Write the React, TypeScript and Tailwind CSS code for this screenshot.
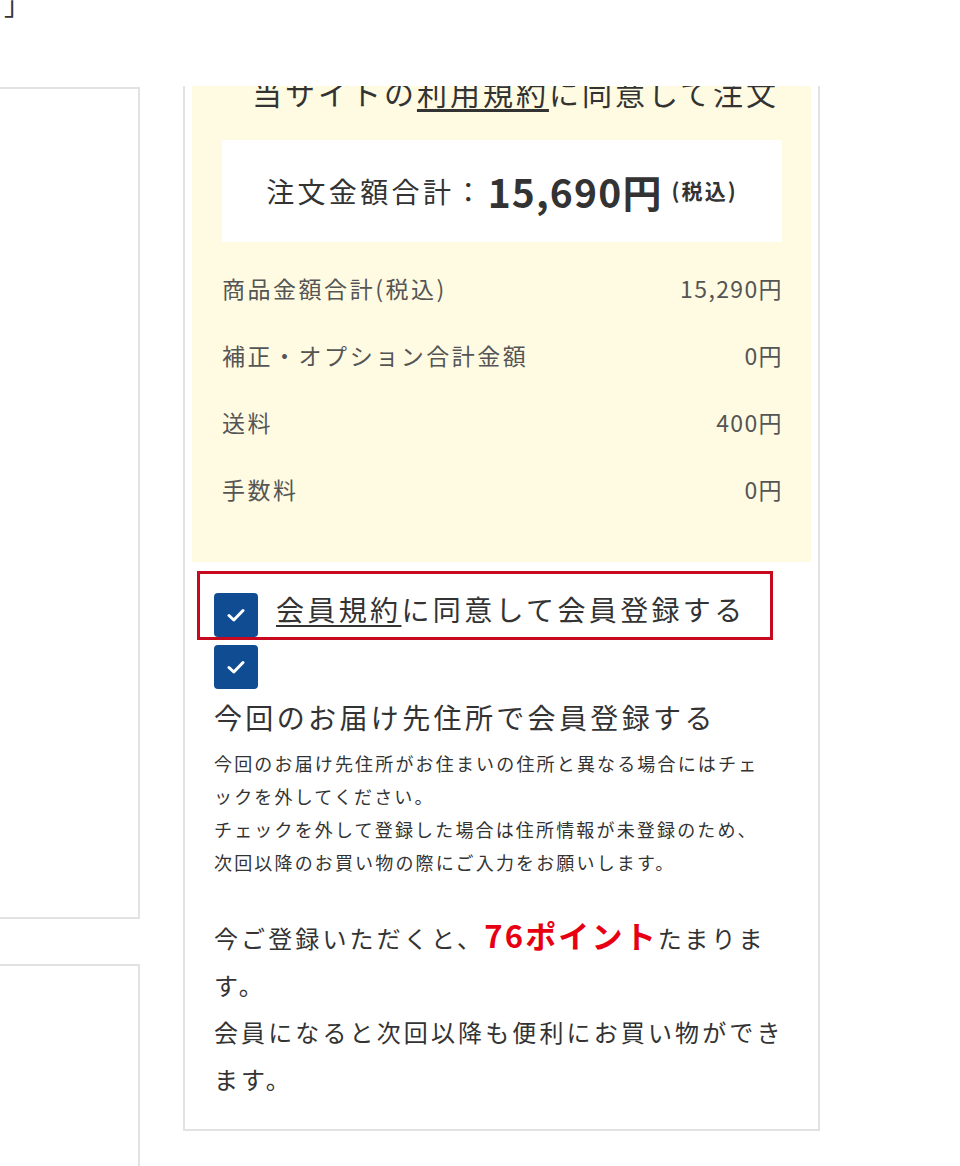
import React from "react";

const Check = () => (
  <div className="w-[44px] h-[44px] shrink-0 rounded-[4px] bg-[#0f4c92] flex items-center justify-center">
    <svg width="18" height="14" viewBox="0 0 18 14" fill="none">
      <path d="M2 7.5 L6.8 12 L16 2.5" stroke="#fff" strokeWidth="3" strokeLinecap="round" strokeLinejoin="round" />
    </svg>
  </div>
);

const rows: [string, string][] = [
  ["商品金額合計(税込)", "15,290円"],
  ["補正・オプション合計金額", "0円"],
  ["送料", "400円"],
  ["手数料", "0円"],
];

export default function App() {
  return (
    <div
      className="relative w-[960px] h-[1166px] overflow-hidden bg-white text-[#333]"
      style={{ fontFamily: '"Noto Sans CJK JP", "Noto Sans", sans-serif' }}
    >
      <div className="h-[86px] flex items-start">
        <div className="ml-[4px] -mt-[16px] text-[26px] leading-[40px]">」</div>
      </div>
      <div className="flex items-start">
        <div className="w-[140px] shrink-0 pt-[1px]">
          <div className="h-[832px] border-t-2 border-r-2 border-b-2 border-[#e2e2e2]" />
          <div className="mt-[45px] h-[300px] border-t-2 border-r-2 border-[#e2e2e2]" />
        </div>
        <div className="ml-[43px] w-[637px] shrink-0 border-x-2 border-b-2 border-[#e2e2e2] px-[7px] pb-[27px] overflow-hidden">
          <div className="bg-[#fffbe3] overflow-hidden pb-[39px] flex flex-col">
            <div className="-mt-[14px] pl-[28px] h-[40px] leading-[40px] text-center text-[30px] tracking-[0.1em] whitespace-nowrap">
              当サイトの<span className="underline underline-offset-4">利用規約</span>に同意して注文
            </div>
            <div className="mt-[28px] ml-[30px] mr-[29px] h-[102px] bg-white flex items-center justify-center whitespace-nowrap">
              <span className="text-[28px] tracking-[0.12em]">注文金額合計：</span>
              <span className="text-[39px] font-bold tracking-[0.03em] ml-[2px]">15,690円</span>
              <span className="text-[21px] font-bold tracking-[0.1em] ml-[9px]">(税込)</span>
            </div>
            <div className="mt-[13px] pl-[30px] pr-[29px] text-[#555]">
              {rows.map(([l, v]) => (
                <div key={l} className="h-[67px] flex items-center justify-between text-[23px]">
                  <span className="tracking-[0.11em]">{l}</span>
                  <span className="tracking-[0.06em] -mr-[1px]">{v}</span>
                </div>
              ))}
            </div>
          </div>

          <div className="pl-[22px]">
            <div className="relative mt-[31px] flex items-start gap-[18px]">
              <div className="absolute left-[-17px] top-[-22px] w-[576px] h-[69px] border-[3px] border-[#c70a1f]" />
              <Check />
              <div className="leading-[32px] text-[28px] tracking-[0.12em] whitespace-nowrap">
                <span className="underline underline-offset-4">会員規約</span>に同意して会員登録する
              </div>
            </div>
            <div className="mt-[8px]">
              <Check />
            </div>
            <div className="mt-[8px] text-[28px] leading-[40px] tracking-[0.12em] whitespace-nowrap">
              今回のお届け先住所で会員登録する
            </div>
            <div className="mt-[10px] text-[18px] leading-[33px] tracking-[0.12em] whitespace-nowrap">
              今回のお届け先住所がお住まいの住所と異なる場合にはチェ
              <br />
              ックを外してください。
              <br />
              チェックを外して登録した場合は住所情報が未登録のため、
              <br />
              次回以降のお買い物の際にご入力をお願いします。
            </div>
            <div className="mt-[32px] text-[24px] leading-[47px] tracking-[0.13em] whitespace-nowrap">
              今ご登録いただくと、
              <span className="text-[#e60012] font-bold text-[31px] tracking-[0.07em]">76ポイント</span>
              たまりま
              <br />
              す。
              <br />
              会員になると次回以降も便利にお買い物ができ
              <br />
              ます。
            </div>
          </div>
        </div>
      </div>
    </div>
  );
}
